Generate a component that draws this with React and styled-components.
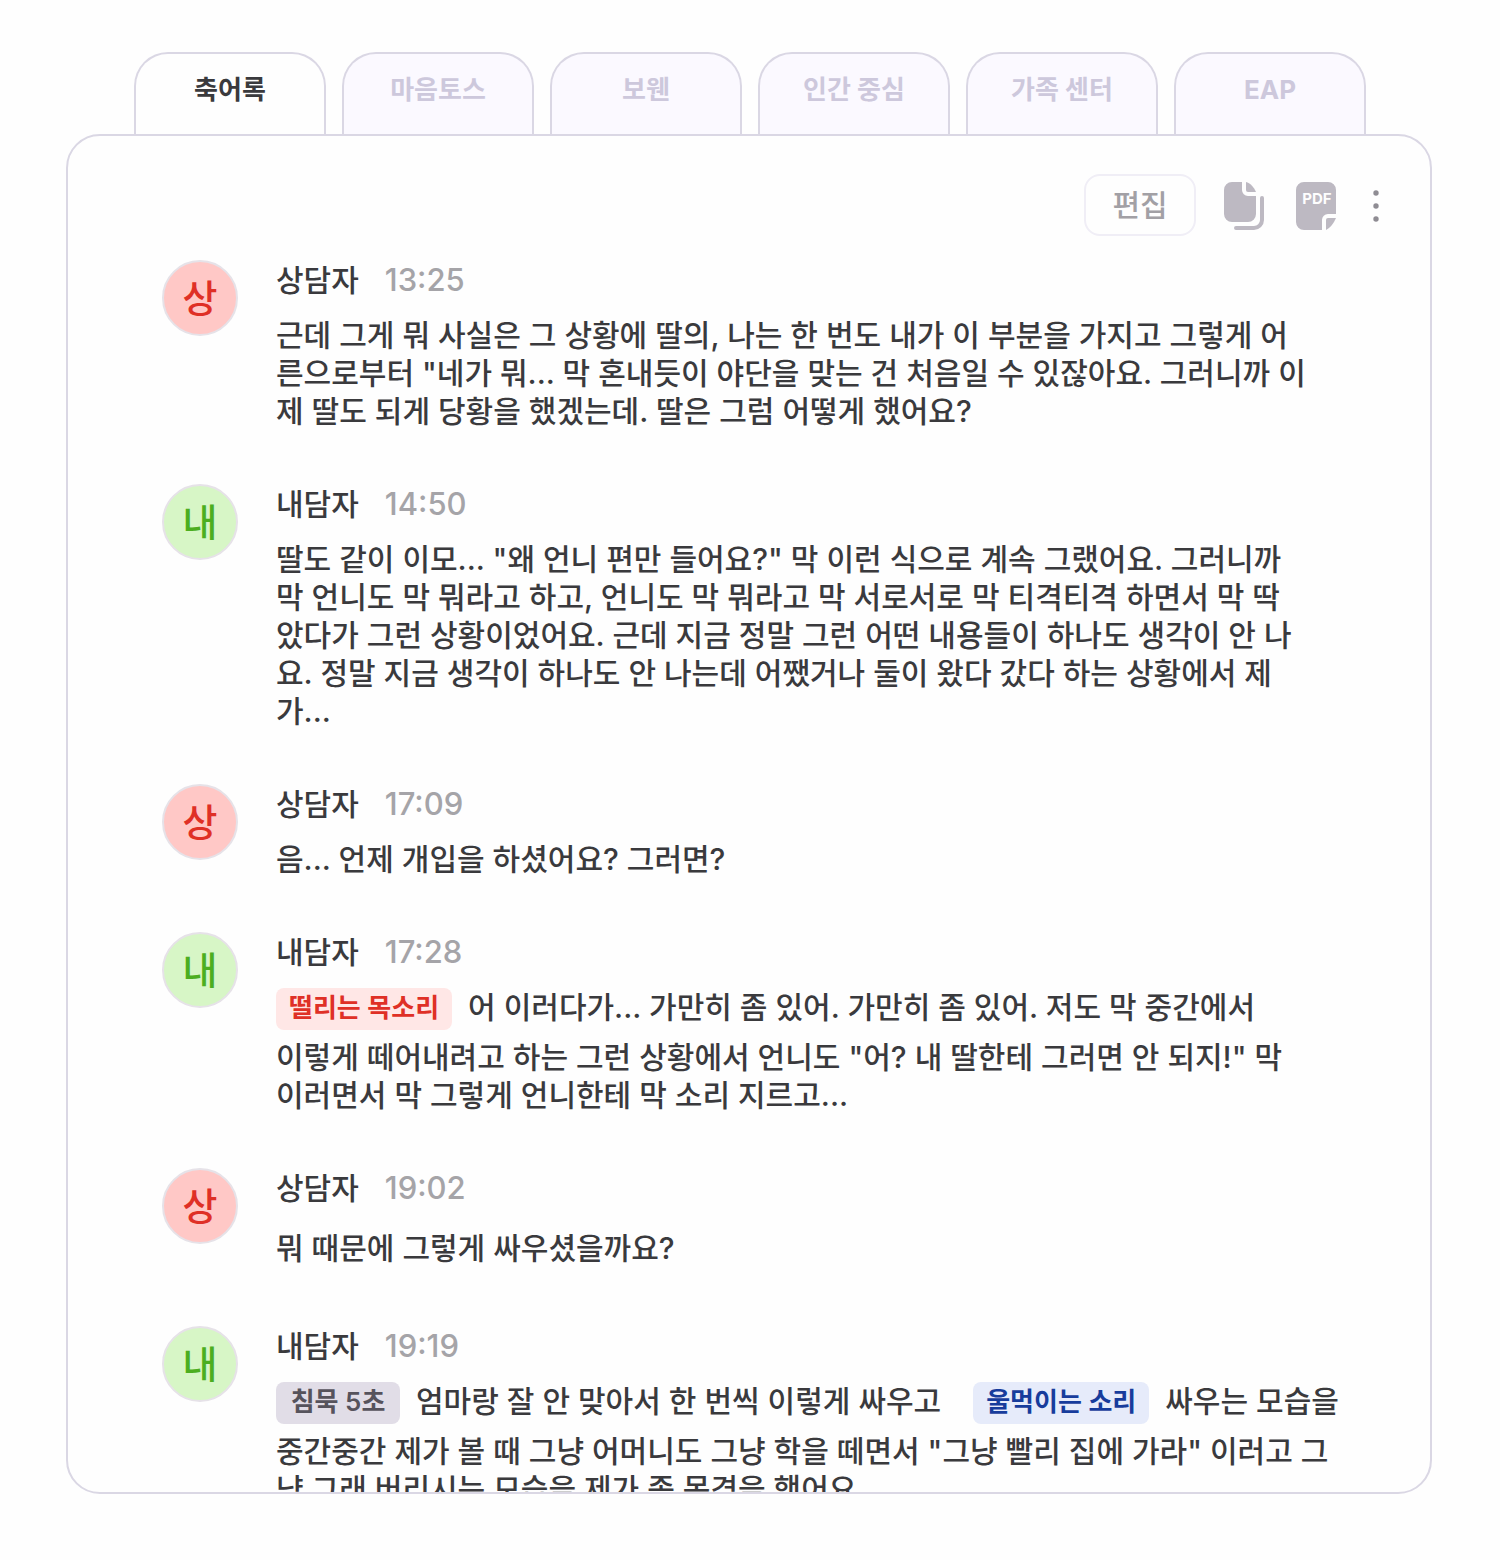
import React, { useState } from 'react';
import styled, { createGlobalStyle } from 'styled-components';

const GlobalStyle = createGlobalStyle`
  * {
    box-sizing: border-box;
  }

  body {
    margin: 0;
    background: #fefefe;
    color: #3a3a3d;
    font-family: Inter, "Noto Sans CJK KR", sans-serif;
  }

  button {
    font-family: inherit;
    cursor: pointer;
  }
`;

const Page = styled.div`
  display: flex;
  flex-direction: column;
  height: 100vh;
  padding: 52px 68px 66px 66px;
`;

const TabList = styled.div`
  display: grid;
  grid-template-columns: repeat(6, 1fr);
  gap: 16px;
  padding: 0 66px 0 68px;
`;

const Tab = styled.button`
  height: 82px;
  padding: 0 0 8px;
  border: 2px solid #dad7e4;
  border-bottom: none;
  border-radius: 34px 34px 0 0;
  background: ${(props) => (props.$active ? '#fefefe' : '#fbf9ff')};
  color: ${(props) => (props.$active ? '#3a3a3d' : '#cdc8dc')};
  font-size: 26px;
  font-weight: 700;
  line-height: 38px;
`;

const Panel = styled.main`
  flex: 1;
  min-height: 0;
  padding: 38px 46px 0 94px;
  border: 2px solid #dad7e4;
  border-radius: 34px;
  background: #fefefe;
  overflow: hidden;
`;

const Toolbar = styled.div`
  display: flex;
  justify-content: flex-end;
  align-items: center;
  gap: 28px;
`;

const EditButton = styled.button`
  width: 112px;
  height: 62px;
  padding: 0;
  border: 2px solid #f0eef6;
  border-radius: 16px;
  background: #fefefe;
  color: #a2a0a5;
  font-size: 30px;
  font-weight: 500;
  line-height: 38px;
`;

const IconGroup = styled.div`
  display: flex;
  align-items: center;
  gap: 32px;
  padding-top: 2px;
`;

const IconButton = styled.button`
  display: flex;
  padding: 0;
  border: none;
  background: transparent;
`;

const Messages = styled.ol`
  display: flex;
  flex-direction: column;
  gap: 54px;
  margin: 24px 0 0;
  padding: 0;
  list-style: none;
`;

const Message = styled.li`
  display: flex;
  align-items: flex-start;
  gap: 38px;
`;

const Avatar = styled.div`
  display: flex;
  flex-shrink: 0;
  justify-content: center;
  align-items: center;
  width: 76px;
  height: 76px;
  border: 2px solid #e6e2e8;
  border-radius: 50%;
  background: ${(props) => (props.$counselor ? '#ffc8c6' : '#d7f6c6')};
  color: ${(props) => (props.$counselor ? '#df3026' : '#4cae20')};
  font-size: 38px;
  font-weight: 500;
  line-height: 48px;
`;

const Content = styled.div`
  flex: 1;
  min-width: 0;
`;

const MessageHead = styled.div`
  display: flex;
  align-items: center;
  gap: 26px;
  padding-bottom: 16px;
  font-weight: 500;
  line-height: 40px;
`;

const Speaker = styled.span`
  font-size: 30px;
  line-height: 38px;
`;

const Time = styled.time`
  color: #a5a4a8;
  font-size: 31px;
`;

const Text = styled.p`
  margin: 0;
  font-size: 30px;
  font-weight: 500;
  line-height: ${(props) => (props.$loose ? '48px' : '38px')};
  white-space: pre-line;
`;

const TaggedLine = styled.div`
  display: flex;
  flex-wrap: wrap;
  gap: 8px 32px;
  margin-bottom: 8px;
`;

const Segment = styled.div`
  display: flex;
  align-items: flex-start;
  gap: 16px;
`;

const tagColors = {
  red: { background: '#ffe7e6', color: '#df3026' },
  gray: { background: '#e1dde7', color: '#56535c' },
  blue: { background: '#e6ebfa', color: '#173c9c' },
};

const Tag = styled.span`
  flex-shrink: 0;
  min-width: 124px;
  height: 42px;
  padding: 0 13px;
  border-radius: 8px;
  background: ${(props) => tagColors[props.$tone].background};
  color: ${(props) => tagColors[props.$tone].color};
  font-size: 26px;
  font-weight: 600;
  line-height: 40px;
  text-align: center;
`;

const tabs = ['축어록', '마음토스', '보웬', '인간 중심', '가족 센터', 'EAP'];

const messages = [
  {
    counselor: true,
    time: '13:25',
    text: `근데 그게 뭐 사실은 그 상황에 딸의, 나는 한 번도 내가 이 부분을 가지고 그렇게 어
른으로부터 "네가 뭐... 막 혼내듯이 야단을 맞는 건 처음일 수 있잖아요. 그러니까 이
제 딸도 되게 당황을 했겠는데. 딸은 그럼 어떻게 했어요?`,
  },
  {
    counselor: false,
    time: '14:50',
    text: `딸도 같이 이모... "왜 언니 편만 들어요?" 막 이런 식으로 계속 그랬어요. 그러니까
막 언니도 막 뭐라고 하고, 언니도 막 뭐라고 막 서로서로 막 티격티격 하면서 막 딱
았다가 그런 상황이었어요. 근데 지금 정말 그런 어떤 내용들이 하나도 생각이 안 나
요. 정말 지금 생각이 하나도 안 나는데 어쨌거나 둘이 왔다 갔다 하는 상황에서 제
가...`,
  },
  {
    counselor: true,
    time: '17:09',
    text: '음... 언제 개입을 하셨어요? 그러면?',
  },
  {
    counselor: false,
    time: '17:28',
    segments: [
      { tone: 'red', tag: '떨리는 목소리', text: '어 이러다가... 가만히 좀 있어. 가만히 좀 있어. 저도 막 중간에서' },
    ],
    text: `이렇게 떼어내려고 하는 그런 상황에서 언니도 "어? 내 딸한테 그러면 안 되지!" 막
이러면서 막 그렇게 언니한테 막 소리 지르고...`,
  },
  {
    counselor: true,
    time: '19:02',
    loose: true,
    text: '뭐 때문에 그렇게 싸우셨을까요?',
  },
  {
    counselor: false,
    time: '19:19',
    segments: [
      { tone: 'gray', tag: '침묵 5초', text: '엄마랑 잘 안 맞아서 한 번씩 이렇게 싸우고' },
      { tone: 'blue', tag: '울먹이는 소리', text: '싸우는 모습을' },
    ],
    text: `중간중간 제가 볼 때 그냥 어머니도 그냥 학을 떼면서 "그냥 빨리 집에 가라" 이러고 그
냥 그래 버리시는 모습을 제가 좀 목격을 했어요`,
  },
];

const CopyIcon = () => (
  <svg width="40" height="48" viewBox="0 0 40 48" fill="none" aria-hidden="true">
    <path
      d="M8 0H18V8a6 6 0 0 0 6 6H32V32a8 8 0 0 1-8 8H8a8 8 0 0 1-8-8V8a8 8 0 0 1 8-8Z"
      fill="#bdb9c2"
    />
    <path d="M22 0C26 1 30 5 32 10H24a2 2 0 0 1-2-2Z" fill="#bdb9c2" />
    <path d="M38 16V38a8 8 0 0 1-8 8H12" stroke="#bdb9c2" strokeWidth="4" strokeLinecap="round" />
  </svg>
);

const PdfIcon = () => (
  <svg width="40" height="48" viewBox="0 0 40 48" aria-hidden="true">
    <path
      d="M8 0H32a8 8 0 0 1 8 8V32H32a6 6 0 0 0-6 6V48H8a8 8 0 0 1-8-8V8a8 8 0 0 1 8-8Z"
      fill="#bdb9c2"
    />
    <path d="M30 48V38a2 2 0 0 1 2-2H40C38 41 34 46 30 48Z" fill="#bdb9c2" />
    <text x="21" y="22" textAnchor="middle" fontFamily="Inter" fontSize="15" fontWeight="700" fill="#fefefe">
      PDF
    </text>
  </svg>
);

const MoreIcon = () => (
  <svg width="16" height="48" viewBox="0 0 16 48" fill="#8f8c93" aria-hidden="true">
    <circle cx="8" cy="11" r="2.7" />
    <circle cx="8" cy="24" r="2.7" />
    <circle cx="8" cy="37" r="2.7" />
  </svg>
);

const TranscriptMessage = ({ message }) => (
  <Message>
    <Avatar $counselor={message.counselor}>{message.counselor ? '상' : '내'}</Avatar>
    <Content>
      <MessageHead>
        <Speaker>{message.counselor ? '상담자' : '내담자'}</Speaker>
        <Time>{message.time}</Time>
      </MessageHead>
      {message.segments && (
        <TaggedLine>
          {message.segments.map((segment) => (
            <Segment key={segment.tag}>
              <Tag $tone={segment.tone}>{segment.tag}</Tag>
              <Text as="span">{segment.text}</Text>
            </Segment>
          ))}
        </TaggedLine>
      )}
      <Text $loose={message.loose}>{message.text}</Text>
    </Content>
  </Message>
);

const App = () => {
  const [activeTab, setActiveTab] = useState(tabs[0]);

  return (
    <Page>
      <GlobalStyle />
      <TabList role="tablist">
        {tabs.map((tab) => (
          <Tab
            key={tab}
            type="button"
            role="tab"
            aria-selected={tab === activeTab}
            $active={tab === activeTab}
            onClick={() => setActiveTab(tab)}
          >
            {tab}
          </Tab>
        ))}
      </TabList>

      <Panel>
        <Toolbar>
          <EditButton type="button">편집</EditButton>
          <IconGroup>
            <IconButton type="button" aria-label="복사">
              <CopyIcon />
            </IconButton>
            <IconButton type="button" aria-label="PDF 저장">
              <PdfIcon />
            </IconButton>
            <IconButton type="button" aria-label="더보기">
              <MoreIcon />
            </IconButton>
          </IconGroup>
        </Toolbar>

        <Messages>
          {messages.map((message) => (
            <TranscriptMessage key={message.time} message={message} />
          ))}
        </Messages>
      </Panel>
    </Page>
  );
};

export default App;
